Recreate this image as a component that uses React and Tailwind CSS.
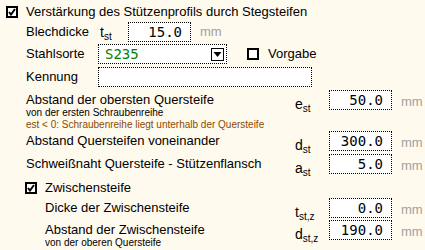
const SANS = "font-['Liberation_Sans',Arial,sans-serif]"
const MONO = "font-['DejaVu_Sans_Mono',monospace]"

function Check({ checked }) {
  return (
    <span className="flex h-[12px] w-[12px] items-center justify-center border-2 border-black bg-white">
      {checked && (
        <svg width="8" height="8" viewBox="0 0 8 8">
          <path d="M1 4 L3 6.5 L7 1" fill="none" stroke="black" strokeWidth="2" />
        </svg>
      )}
    </span>
  )
}

function Sym({ b, s }) {
  return (
    <span className="text-[14px] leading-none">
      {b}
      <span className="relative top-[3px] text-[10px]">{s}</span>
    </span>
  )
}

function Num({ value, w = 'w-[63px]' }) {
  return (
    <div
      className={`${w} flex h-[20px] items-center justify-end border border-dotted border-black bg-white pr-[8px] ${MONO} text-[14px]`}
    >
      {value}
    </div>
  )
}

function Field({ label, sub, note, sym, s, value, indent = false, h = 'h-[22px]' }) {
  return (
    <div className={`flex ${h} items-start`}>
      <div className={`${indent ? 'w-[295px] pl-[45px]' : 'w-[295px] pl-[26px]'} pt-[3px]`}>
        <div className="text-[13px] leading-[14px]">{label}</div>
        {sub && <div className="text-[10px] leading-[12px]">{sub}</div>}
        {note && <div className="text-[10px] leading-[12px] text-[#8a4a00]">{note}</div>}
      </div>
      <div className="w-[34px] pt-[2px]">
        <Sym b={sym} s={s} />
      </div>
      <Num value={value} />
      <span className="ml-[9px] pt-[2px] text-[13px] text-[#a0a0a0]">mm</span>
    </div>
  )
}

export default function App() {
  return (
    <div className={`h-[250px] w-[425px] overflow-hidden bg-[#fffaee] text-black ${SANS}`}>
      <div className="flex h-[21px] items-center pt-[2px]">
        <span className="ml-[6px]">
          <Check checked />
        </span>
        <span className="ml-[8px] text-[13px]">Verstärkung des Stützenprofils durch Stegsteifen</span>
      </div>

      <div className="flex h-[22px] items-center">
        <span className="w-[100px] pl-[26px] text-[13px]">Blechdicke</span>
        <span className="w-[28px]">
          <Sym b="t" s="st" />
        </span>
        <Num value="15.0" />
        <span className="ml-[9px] text-[13px] text-[#a0a0a0]">mm</span>
      </div>

      <div className="flex h-[22px] items-center">
        <span className="w-[98px] pl-[26px] text-[13px]">Stahlsorte</span>
        <div className="flex h-[20px] w-[129px] items-center justify-between border border-dotted border-black bg-white pl-[6px] pr-[2px]">
          <span className={`${MONO} text-[14px] text-[#008000]`}>S235</span>
          <span className="flex h-[13px] w-[13px] items-center justify-center border border-black bg-white">
            <svg width="9" height="7" viewBox="0 0 9 7">
              <path d="M0.5 1 L8.5 1 L4.5 6 Z" fill="black" />
            </svg>
          </span>
        </div>
        <span className="ml-[20px]">
          <Check />
        </span>
        <span className="ml-[9px] text-[13px]">Vorgabe</span>
      </div>

      <div className="flex h-[23px] items-center">
        <span className="w-[98px] pl-[26px] text-[13px]">Kennung</span>
        <div className="h-[20px] w-[214px] border border-dotted border-black bg-white" />
      </div>

      <div className="pt-[2px]">
        <Field
          label="Abstand der obersten Quersteife"
          sub="von der ersten Schraubenreihe"
          note="est < 0: Schraubenreihe liegt unterhalb der Quersteife"
          sym="e"
          s="st"
          value="50.0"
          h="h-[41px]"
        />
        <Field label="Abstand Quersteifen voneinander" sym="d" s="st" value="300.0" h="h-[23px]" />
        <Field label="Schweißnaht Quersteife - Stützenflansch" sym="a" s="st" value="5.0" />
      </div>

      <div className="flex h-[22px] items-center pt-[2px]">
        <span className="ml-[25px]">
          <Check checked />
        </span>
        <span className="ml-[8px] text-[13px]">Zwischensteife</span>
      </div>

      <Field indent label="Dicke der Zwischensteife" sym="t" s="st,z" value="0.0" />
      <Field indent label="Abstand der Zwischensteife" sub="von der oberen Quersteife" sym="d" s="st,z" value="190.0" />
    </div>
  )
}
